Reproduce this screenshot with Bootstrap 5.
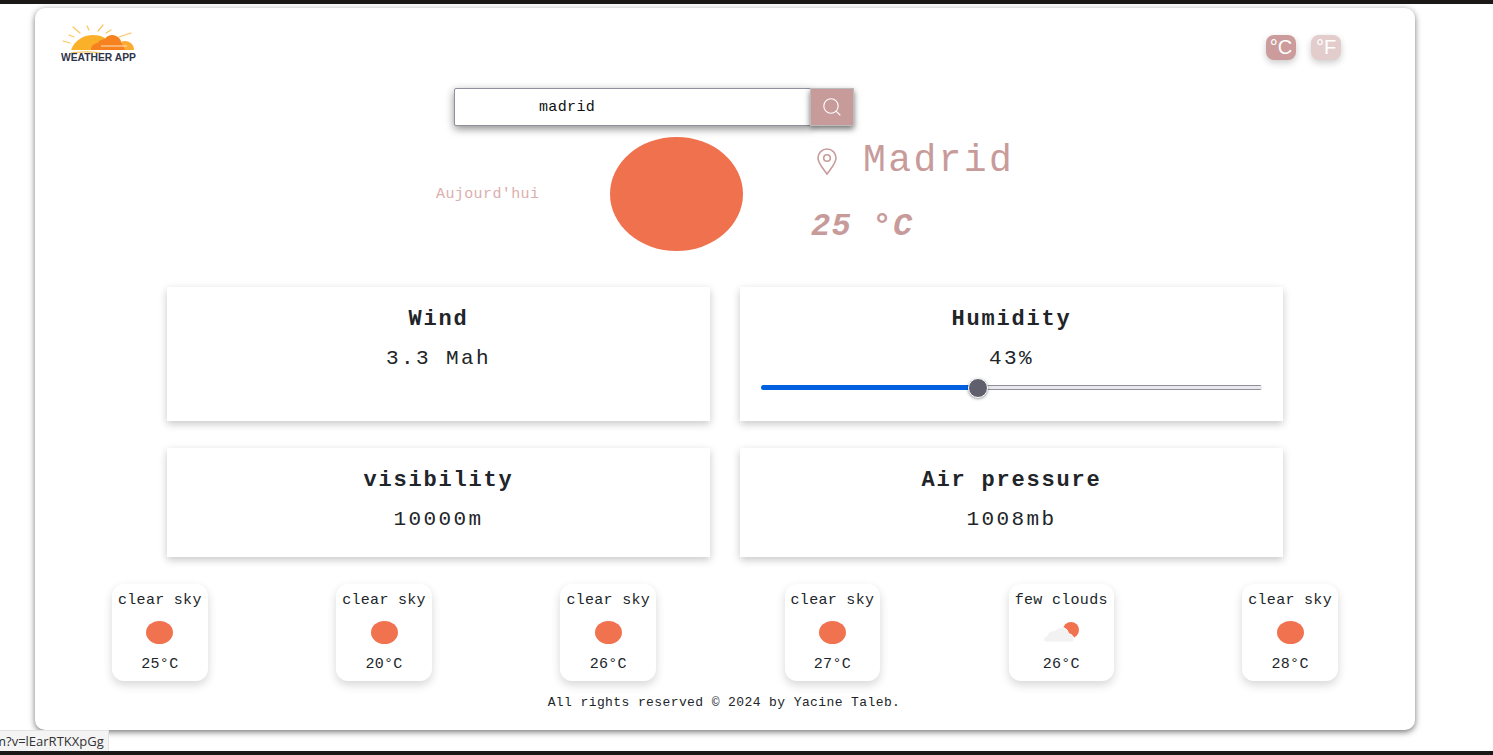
<!DOCTYPE html>
<html lang="en">
<head>
    <meta charset="UTF-8">
    <meta name="viewport" content="width=device-width, initial-scale=1.0">
    <title>Weather App</title>
    <link href="https://cdn.jsdelivr.net/npm/bootstrap@5.3.0/dist/css/bootstrap.min.css" rel="stylesheet">
    <style>
        html, body { height: 755px; overflow: hidden; }
        body {
            background: #fff;
            border-top: 4px solid #1b1918;
            border-bottom: 4px solid #1b1918;
            font-family: "Liberation Mono", "Courier New", monospace;
            color: #212529;
        }
        .app-panel {
            width: 1380px;
            height: 722px;
            margin: 4px 0 0 35px;
            border-radius: 10px;
            background: #fff;
            box-shadow: 0 2px 6px rgba(0, 0, 0, .55);
        }
        .app-header { height: 80px; padding: 14px 74px 0 26px; }
        .logo-box { width: 80px; height: 44px; }
        .logo-box svg { display: block; }
        .logo-name { font: 700 10.3px/1 "Liberation Sans", sans-serif; color: #2f3448; margin-top: -1px; white-space: nowrap; }
        .unit-actions { margin-top: 13px; gap: 15px; }
        .unit-btn {
            width: 30px; height: 25px; padding: 0;
            font: 400 20px/25px "Liberation Sans", sans-serif;
            color: #fff; background: #cc9c9c;
            border-radius: 8px; border: 0;
            box-shadow: 0 3px 7px rgba(0, 0, 0, .2);
        }
        .unit-btn.unit-off { background: #e3cccc; }
        .search-row { width: 400px; margin-left: 419px; }
        .search-input {
            height: 38px; border: 1px solid #8f8f9d; border-radius: 2px 0 0 2px;
            padding: 0 8px 0 84px; font-family: inherit; font-size: 15px; letter-spacing: .35px;
            color: #111; box-shadow: 0 3px 8px rgba(0, 0, 0, .45);
        }
        .search-btn {
            width: 44px; height: 38px; padding: 0; border: 1px solid #bbb; border-radius: 0;
            background: #c89b9b; box-shadow: 0 3px 6px rgba(0, 0, 0, .55);
        }
        .current-row { height: 114px; margin-top: 11px; padding-left: 401px; }
        .today-label { width: 174px; font-size: 15px; letter-spacing: .4px; color: #dcaeae; padding-top: 2px; }
        .sun-big { width: 133px; height: 114px; border-radius: 50%; background: #ef714e; }
        .current-info { margin-left: 68px; color: #c89b9b; margin-top: -5px; }
        .city-line { height: 44px; }
        .city-pin { margin: 2px 0 0 4px; }
        .city-name { font-size: 38px; line-height: 44px; letter-spacing: 2.4px; margin-left: 24px; font-weight: 400; }
        .temp-now { font-size: 32px; line-height: 36px; letter-spacing: 1.3px; font-weight: 700; font-style: italic; margin: 26px 0 0; }
        .metrics { width: 1116px; margin: 36px auto 0 auto; }
        .metrics .row { --bs-gutter-x: 30px; --bs-gutter-y: 27px; }
        .metric-card {
            border: 0; border-radius: 0; text-align: center; padding-top: 17px;
            box-shadow: 0 3px 8px rgba(0, 0, 0, .22);
        }
        .metric-tall { height: 134px; }
        .metric-short { height: 109px; }
        .metric-title { font-size: 22px; line-height: 30px; letter-spacing: 1.8px; font-weight: 700; margin: 0; padding-top: 1px; }
        .metric-value { font-size: 21px; line-height: 30px; letter-spacing: 2.4px; margin: 9px 0 0; }
        .humidity-range {
            -webkit-appearance: none; appearance: none; display: block;
            width: 501px; height: 5px; margin: 11px 0 0 21px;
            border: 0; border-radius: 3px; outline: 0;
        }
        .humidity-range::-webkit-slider-thumb {
            -webkit-appearance: none; appearance: none;
            width: 20px; height: 20px; border-radius: 50%;
            background: #5f5f6e; border: 1px solid #fff; box-shadow: 0 1px 3px rgba(0, 0, 0, .4);
        }
        .forecast-row { width: 1226px; margin: 27px 0 0 77px; }
        .day-card {
            height: 97px; padding: 8px 6px 0; border-radius: 12px; text-align: center;
            font-size: 15px; line-height: 18px; letter-spacing: .3px; background: #fff;
            box-shadow: 0 4px 10px rgba(0, 0, 0, .16);
        }
        .day-icon { height: 23px; margin: 11px 0 12px; }
        .sun-small { width: 27px; height: 23px; border-radius: 50%; background: #f1724f; }
        .footer-note { margin: 14px 0 0 -2px; text-align: center; font-size: 13px; letter-spacing: .4px; line-height: 16px; }
        .link-status {
            position: fixed; left: 0; bottom: 4px; width: 109px; height: 21px; overflow: hidden;
            background: #f4f4f4; border: 1px solid #e2e2e2; border-left: 0; border-bottom: 0;
            font: 13px/20px "Open Sans", sans-serif; color: #333; white-space: nowrap;
        }
        .link-status span { display: block; margin-left: -6px; }
    </style>
</head>
<body>
    <div class="app-panel">
        <header class="app-header d-flex justify-content-between align-items-start">
            <div class="logo-box">
                <svg width="80" height="32" viewBox="0 0 80 32" fill="none">
                    <g stroke="#fcc55c" stroke-width="1.2" stroke-linecap="round">
                        <path d="M12 5 L19 11"/><path d="M26 4 L28 8"/><path d="M42 3 L37 9"/><path d="M50 8 L45 11"/>
                        <path d="M8 13 L13 15"/><path d="M2 19 L9 21"/><path d="M70 11 L58 15"/>
                    </g>
                    <path d="M10 28 C14 17 24 13 32 13 C40 13 46 16 50 22 L50 28 Z" fill="#fbb02a"/>
                    <path d="M30 28 C30 23 34 21 37 21 C38 18 42 17 44 17 C46 13 52 12 55 14 C58 15 60 18 60 20 C66 19 68 22 68 28 Z" fill="#f5821f"/>
                    <path d="M60 20 C66 17 73 21 73 28 L64 28 Z" fill="#fbaa33"/>
                    <path d="M40 24 L66 24" stroke="#ffe3c0" stroke-width="1"/>
                    <path d="M10 31 C24 29 36 30 42 32" stroke="#fbb83a" stroke-width="1"/>
                </svg>
                <div class="logo-name">WEATHER APP</div>
            </div>
            <div class="unit-actions d-flex">
                <button class="btn unit-btn" type="button">°C</button>
                <button class="btn unit-btn unit-off" type="button">°F</button>
            </div>
        </header>

        <div class="search-row input-group flex-nowrap">
            <input class="form-control search-input" type="text" value="madrid" aria-label="City">
            <button class="btn search-btn d-flex align-items-center justify-content-center" type="button" aria-label="Search">
                <svg width="20" height="20" viewBox="0 0 20 20" fill="none" stroke="#fff" stroke-width="1.1" stroke-linecap="round">
                    <circle cx="9" cy="9" r="7.2"/><path d="M14.3 14.3 L18 18"/>
                </svg>
            </button>
        </div>

        <div class="current-row d-flex align-items-center">
            <div class="today-label">Aujourd'hui</div>
            <div class="sun-big flex-shrink-0"></div>
            <div class="current-info">
                <div class="city-line d-flex align-items-center">
                    <svg class="city-pin" width="24" height="30" viewBox="0 0 24 30" fill="none" stroke="#c89b9b" stroke-width="1.6">
                        <path d="M12 27 C7 20 3 16 3 11 A9 9 0 0 1 21 11 C21 16 17 20 12 27 Z"/><circle cx="12" cy="11" r="3.3"/>
                    </svg>
                    <h1 class="city-name mb-0">Madrid</h1>
                </div>
                <p class="temp-now">25 °C</p>
            </div>
        </div>

        <section class="metrics">
            <div class="row">
                <div class="col-6">
                    <div class="card metric-card metric-tall">
                        <h3 class="metric-title">Wind</h3>
                        <p class="metric-value">3.3 Mah</p>
                    </div>
                </div>
                <div class="col-6">
                    <div class="card metric-card metric-tall">
                        <h3 class="metric-title">Humidity</h3>
                        <p class="metric-value">43%</p>
                        <input class="humidity-range" type="range" min="0" max="100" value="43" aria-label="Humidity" style="background:linear-gradient(to right,#0060df 43%,transparent 43%),linear-gradient(#8f8f9d 1px,#e9e9ed 1px,#e9e9ed 4px,#8f8f9d 4px)">
                    </div>
                </div>
                <div class="col-6">
                    <div class="card metric-card metric-short">
                        <h3 class="metric-title">visibility</h3>
                        <p class="metric-value">10000m</p>
                    </div>
                </div>
                <div class="col-6">
                    <div class="card metric-card metric-short">
                        <h3 class="metric-title">Air pressure</h3>
                        <p class="metric-value">1008mb</p>
                    </div>
                </div>
            </div>
        </section>

        <section class="forecast-row d-flex justify-content-between">
            <div class="day-card">clear sky<div class="day-icon d-flex justify-content-center"><div class="sun-small"></div></div>25°C</div>
            <div class="day-card">clear sky<div class="day-icon d-flex justify-content-center"><div class="sun-small"></div></div>20°C</div>
            <div class="day-card">clear sky<div class="day-icon d-flex justify-content-center"><div class="sun-small"></div></div>26°C</div>
            <div class="day-card">clear sky<div class="day-icon d-flex justify-content-center"><div class="sun-small"></div></div>27°C</div>
            <div class="day-card">few clouds<div class="day-icon d-flex justify-content-center">
                <svg width="36" height="23" viewBox="0 0 36 23">
                    <circle cx="28" cy="9" r="8" fill="#f1724f"/>
                    <path d="M3 21 C0 21 0 16 4 15 C5 11 9 9 12 10 C14 6 21 5 24 9 C25 11 26 12 26 13 C30 13 32 18 30 21 Z" fill="#f2f2f2" stroke="#fff" stroke-width="1"/>
                </svg>
            </div>26°C</div>
            <div class="day-card">clear sky<div class="day-icon d-flex justify-content-center"><div class="sun-small"></div></div>28°C</div>
        </section>

        <p class="footer-note">All rights reserved © 2024 by Yacine Taleb.</p>
    </div>
    <div class="link-status"><span>m?v=lEarRTKXpGg</span></div>

    <script src="https://cdn.jsdelivr.net/npm/bootstrap@5.3.0/dist/js/bootstrap.bundle.min.js"></script>
</body>
</html>
